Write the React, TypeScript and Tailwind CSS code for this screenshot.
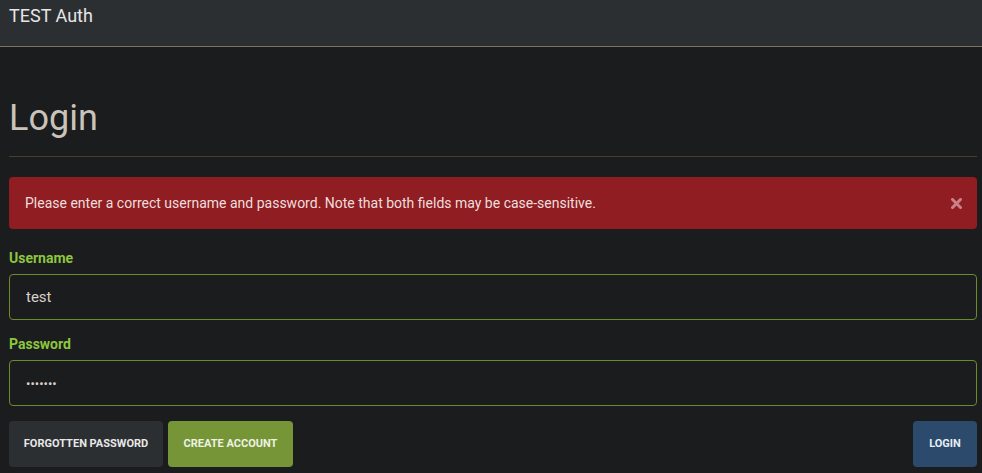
import { useState } from 'react';

export default function App() {
  const [username, setUsername] = useState('test');
  const [password, setPassword] = useState('1234567');
  const [showAlert, setShowAlert] = useState(true);

  return (
    <div className="min-h-screen bg-[#1b1c1e] font-['Roboto',sans-serif] text-[#dcdcdc]">
      <nav className="h-[47px] bg-[#2c2f32] border-b border-[#7d7362] pl-[9px] pt-[4px]">
        <span className="text-[18px] leading-[24px] text-[#e6e6e6]">TEST Auth</span>
      </nav>

      <main className="pl-[9px] pr-[5px]">
        <h1 className="mt-[47px] text-[36px] leading-[48px] text-[#c9c3bb]">Login</h1>
        <hr className="mt-[14px] border-0 border-t border-[#4a3f2c]" />

        {showAlert && (
          <div className="mt-[20px] h-[52px] flex items-center justify-between rounded-[4px] bg-[#8f1d21] pl-[16px] pr-[16px] text-[14px] text-[#f0dede]">
            <span>Please enter a correct username and password. Note that both fields may be case-sensitive.</span>
            <button onClick={() => setShowAlert(false)} className="mr-[-1px]" aria-label="Close">
              <svg width="11" height="11" viewBox="0 0 11 11">
                <path d="M1.5 1.5 L9.5 9.5 M9.5 1.5 L1.5 9.5" stroke="#c98086" strokeWidth="3" strokeLinecap="square" />
              </svg>
            </button>
          </div>
        )}

        <form className="mt-[19px]" onSubmit={(e) => e.preventDefault()}>
          <label htmlFor="username" className="block text-[14px] font-bold text-[#8dc63f] leading-[20px]">
            Username
          </label>
          <input
            id="username"
            value={username}
            onChange={(e) => setUsername(e.target.value)}
            className="mt-[6px] block w-full h-[46px] rounded-[4px] border border-[#6a8c2a] bg-[#1b1c1e] px-[16px] text-[15px] text-[#d6d0c8] outline-none"
          />

          <label htmlFor="password" className="mt-[14px] block text-[14px] font-bold text-[#8dc63f] leading-[20px]">
            Password
          </label>
          <input
            id="password"
            type="password"
            value={password}
            onChange={(e) => setPassword(e.target.value)}
            className="mt-[6px] block w-full h-[46px] rounded-[4px] border border-[#6a8c2a] bg-[#1b1c1e] px-[16px] text-[13px] text-[#d6d0c8] outline-none"
          />

          <div className="mt-[15px] flex items-center">
            <button type="button" className="h-[46px] w-[154px] rounded-[4px] bg-[#2c2f32] text-[11px] font-bold uppercase text-[#e8e8e8]">
              Forgotten Password
            </button>
            <button type="button" className="ml-[5px] h-[46px] w-[125px] rounded-[4px] bg-[#769537] text-[11px] font-bold uppercase text-[#eef2e4]">
              Create Account
            </button>
            <button type="submit" className="ml-auto h-[46px] w-[64px] rounded-[4px] bg-[#2c4a6b] text-[11px] font-bold uppercase text-[#e8eef4]">
              Login
            </button>
          </div>
        </form>
      </main>
    </div>
  );
}
